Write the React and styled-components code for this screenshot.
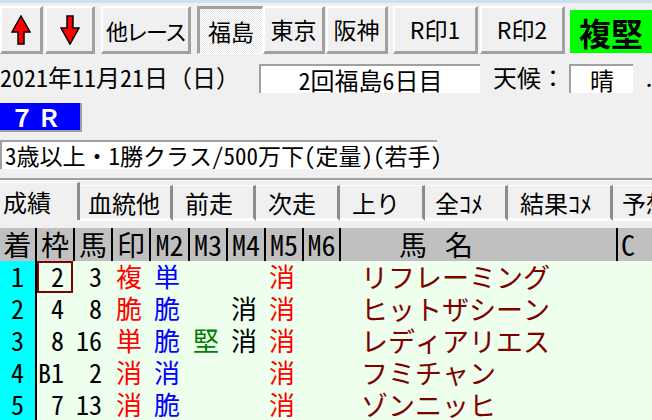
import React from "react";
import styled, { createGlobalStyle, css } from "styled-components";

const GlobalStyle = createGlobalStyle`
  html, body { margin: 0; padding: 0; background: #f0f0f0; }
  body { font-family: "Noto Sans CJK JP", sans-serif; overflow: hidden; }
`;

const MONO = `"Noto Sans Mono CJK JP", "Noto Sans CJK JP", monospace`;
const PROP = `"Noto Sans CJK JP", sans-serif`;

const Page = styled.div`
  width: 652px;
  height: 420px;
  overflow: hidden;
  background: #f0f0f0;
  display: flex;
  flex-direction: column;
`;

const TopStrip = styled.div`
  flex: none;
  height: 3px;
  background: #cddff2;
`;

const Toolbar = styled.div`
  flex: none;
  display: flex;
  align-items: flex-start;
  height: 52px;
  padding-top: 3px;
  box-sizing: border-box;
`;

const ToolButton = styled.div`
  flex: none;
  box-sizing: border-box;
  width: ${(p) => p.$w}px;
  margin-left: ${(p) => p.$ml || 0}px;
  height: 48px;
  display: flex;
  align-items: center;
  justify-content: center;
  font-family: ${PROP};
  font-size: ${(p) => p.$fs || 23}px;
  letter-spacing: ${(p) => p.$ls || 0}px;
  white-space: nowrap;
  line-height: 1;
  color: #000;
  background: #f0f0f0;
  border-top: 2px solid #fff;
  border-left: 2px solid #fff;
  border-right: 3px solid #a0a0a0;
  border-bottom: 3px solid #a0a0a0;
  ${(p) =>
    p.$pressed &&
    css`
      border-top: 3px solid #a0a0a0;
      border-left: 3px solid #a0a0a0;
      border-right: 1px solid #fff;
      border-bottom: 1px solid #fff;
      background-color: #fff;
      background-image: repeating-conic-gradient(#e6e6e6 0 25%, #fff 0 50%);
      background-size: 2px 2px;
    `}
`;

const GreenTag = styled.div`
  flex: none;
  box-sizing: border-box;
  width: 82px;
  height: 43px;
  margin-left: 5px;
  margin-top: 4px;
  background: #00ff00;
  display: flex;
  align-items: center;
  justify-content: center;
  font-family: ${PROP};
  font-weight: 700;
  font-size: 32px;
  line-height: 1;
  color: #000;
`;

const InfoRow = styled.div`
  flex: none;
  display: flex;
  align-items: center;
  height: 29px;
  margin-top: 9px;
`;

const PlainText = styled.div`
  flex: none;
  width: ${(p) => p.$w}px;
  margin-left: ${(p) => p.$ml || 0}px;
  font-family: ${MONO};
  font-size: 24px;
  line-height: 1;
  white-space: nowrap;
  color: #000;
  padding-bottom: 3px;
`;

const InsetBox = styled.div`
  flex: none;
  box-sizing: border-box;
  width: ${(p) => p.$w}px;
  height: 29px;
  background: #fff;
  border-top: 2px solid #a0a0a0;
  border-left: 2px solid #a0a0a0;
  display: flex;
  align-items: center;
  justify-content: ${(p) => (p.$left ? "flex-start" : "center")};
  padding-left: ${(p) => (p.$left ? 3 : 0)}px;
  font-family: ${MONO};
  font-size: ${(p) => p.$fs || 24}px;
  line-height: 1;
  white-space: nowrap;
  color: #000;
`;

const RaceNo = styled.div`
  flex: none;
  box-sizing: border-box;
  width: 82px;
  height: 29px;
  margin-top: 10px;
  background: #0000ff;
  border-right: 2px solid #a0a0a0;
  border-bottom: 2px solid #a0a0a0;
  display: flex;
  align-items: center;
  padding-left: 10px;
  font-family: ${MONO};
  font-weight: 700;
  font-size: 24px;
  letter-spacing: 3px;
  line-height: 1;
  color: #fff;
`;

const ClassRow = styled.div`
  flex: none;
  margin-top: 8px;
  display: flex;
`;

const Separator = styled.div`
  flex: none;
  margin-top: 9px;
  height: 0;
  border-top: 2px solid #a0a0a0;
  border-bottom: 1px solid #fff;
`;

const TabBar = styled.div`
  flex: none;
  display: flex;
  align-items: flex-start;
  height: 47px;
  overflow: hidden;
`;

const Tab = styled.div`
  flex: none;
  box-sizing: border-box;
  width: ${(p) => p.$w}px;
  height: ${(p) => (p.$active ? 38 : 36)}px;
  margin-top: ${(p) => (p.$active ? 1 : 4)}px;
  padding-left: ${(p) => p.$pl}px;
  padding-top: ${(p) => (p.$active ? 6 : 4)}px;
  background: #f0f0f0;
  border-top: 1px solid #fff;
  border-right: 3px solid #8c8c8c;
  border-bottom: ${(p) => (p.$active ? "0" : "3px solid #fff")};
  font-family: ${MONO};
  font-size: 24px;
  line-height: 1.1;
  white-space: nowrap;
  color: #000;
`;

const COLS = "37px 38px 38px 38px 39px 38px 38px 38px 37px 277px 1fr";

const GridRow = styled.div`
  flex: none;
  display: grid;
  grid-template-columns: ${COLS};
  height: ${(p) => p.$h}px;
  background: ${(p) => p.$bg};
`;

const HeadCell = styled.div`
  box-sizing: border-box;
  display: flex;
  align-items: center;
  justify-content: ${(p) => (p.$left ? "flex-start" : "center")};
  padding-left: ${(p) => p.$pl || 0}px;
  border-right: ${(p) => (p.$last ? "0" : "2px solid #000")};
  font-family: ${MONO};
  font-size: 28px;
  line-height: 1;
  letter-spacing: ${(p) => p.$ls || 0}px;
  white-space: nowrap;
  color: #000;
  padding-bottom: 2px;
`;

const Cell = styled.div`
  box-sizing: border-box;
  display: flex;
  align-items: center;
  justify-content: ${(p) =>
    p.$align === "right" ? "flex-end" : p.$align === "center" ? "center" : "flex-start"};
  padding-left: ${(p) => p.$pl || 0}px;
  padding-right: ${(p) => p.$pr || 0}px;
  border-right: 2px solid ${(p) => (p.$rank ? "#000" : "transparent")};
  background: ${(p) => (p.$rank ? "#00ffff" : "transparent")};
  box-shadow: ${(p) => (p.$boxed ? "inset 0 0 0 2px #800000" : "none")};
  font-family: ${MONO};
  font-size: ${(p) => p.$fs || 26}px;
  line-height: 1;
  white-space: nowrap;
  color: ${(p) => p.$color || "#000"};
  padding-bottom: 2px;
`;

const ArrowUp = () => (
  <svg width="20" height="30" viewBox="0 0 20 30">
    <polygon
      points="10,1 19,17 13,17 13,29 7,29 7,17 1,17"
      fill="#ff0000"
      stroke="#000"
      strokeWidth="1.5"
    />
  </svg>
);

const ArrowDown = () => (
  <svg width="20" height="30" viewBox="0 0 20 30">
    <polygon
      points="7,1 13,1 13,13 19,13 10,29 1,13 7,13"
      fill="#ff0000"
      stroke="#000"
      strokeWidth="1.5"
    />
  </svg>
);

const RED = "#ff0000";
const BLUE = "#0000ff";
const GREEN = "#008000";
const BLACK = "#000";

const rows = [
  { rank: "1", waku: "2", uma: "3", marks: [["複", RED], ["単", BLUE], null, null, ["消", RED], null], name: "リフレーミング", boxed: true },
  { rank: "2", waku: "4", uma: "8", marks: [["脆", RED], ["脆", BLUE], null, ["消", BLACK], ["消", RED], null], name: "ヒットザシーン" },
  { rank: "3", waku: "8", uma: "16", marks: [["単", RED], ["脆", BLUE], ["堅", GREEN], ["消", BLACK], ["消", RED], null], name: "レディアリエス" },
  { rank: "4", waku: "B1", uma: "2", marks: [["消", RED], ["消", BLUE], null, null, ["消", RED], null], name: "フミチャン" },
  { rank: "5", waku: "7", uma: "13", marks: [["消", RED], ["脆", BLUE], null, null, ["消", RED], null], name: "ゾンニッヒ" },
];

const buttons = [
  { w: 43, ml: 0, icon: <ArrowUp /> },
  { w: 50, ml: 2, icon: <ArrowDown /> },
  { w: 90, ml: 6, label: "他レース", fs: 22, ls: -2 },
  { w: 66, ml: 6, label: "福島", pressed: true },
  { w: 62, ml: 0, label: "東京" },
  { w: 62, ml: 1, label: "阪神" },
  { w: 85, ml: 5, label: "R印1" },
  { w: 85, ml: 2, label: "R印2" },
];

const tabs = [
  { label: "成績", w: 80, pl: 3, active: true },
  { label: "血統他", w: 93, pl: 8 },
  { label: "前走", w: 83, pl: 12 },
  { label: "次走", w: 84, pl: 12 },
  { label: "上り", w: 85, pl: 12 },
  { label: "全ｺﾒ", w: 83, pl: 10 },
  { label: "結果ｺﾒ", w: 105, pl: 12 },
  { label: "予想ｺﾒ", w: 100, pl: 9 },
];

const headers = ["着", "枠", "馬", "印", "M2", "M3", "M4", "M5", "M6"];

export default function App() {
  return (
    <Page>
      <GlobalStyle />
      <TopStrip />
      <Toolbar>
        {buttons.map((b, i) => (
          <ToolButton key={i} $w={b.w} $ml={b.ml} $pressed={b.pressed} $fs={b.fs} $ls={b.ls}>
            {b.icon || b.label}
          </ToolButton>
        ))}
        <GreenTag>複堅</GreenTag>
      </Toolbar>

      <InfoRow>
        <PlainText $w={259}>2021年11月21日（日）</PlainText>
        <InsetBox $w={221}>2回福島6日目</InsetBox>
        <PlainText $w={76} $ml={13}>天候：</PlainText>
        <InsetBox $w={64}>晴</InsetBox>
        <PlainText $w={20} $ml={10}>.</PlainText>
      </InfoRow>

      <RaceNo>７Ｒ</RaceNo>

      <ClassRow>
        <InsetBox $w={437} $left $fs={23}>
          3歳以上・1勝クラス/500万下(定量)(若手)
        </InsetBox>
      </ClassRow>

      <Separator />

      <TabBar>
        {tabs.map((t) => (
          <Tab key={t.label} $w={t.w} $pl={t.pl} $active={t.active}>
            {t.label}
          </Tab>
        ))}
      </TabBar>

      <GridRow $h={33} $bg="#c0c0c0">
        {headers.map((h) => (
          <HeadCell key={h}>{h}</HeadCell>
        ))}
        <HeadCell $left $pl={58} $ls={2}>
          馬 名
        </HeadCell>
        <HeadCell $left $pl={3} $last>
          C
        </HeadCell>
      </GridRow>

      {rows.map((r) => (
        <GridRow key={r.rank} $h={32} $bg="#eeffee">
          <Cell $rank $align="center">{r.rank}</Cell>
          <Cell $align="right" $pr={9} $boxed={r.boxed}>{r.waku}</Cell>
          <Cell $align="right" $pr={9}>{r.uma}</Cell>
          {r.marks.map((m, i) => (
            <Cell key={i} $pl={3} $color={m ? m[1] : undefined}>
              {m ? m[0] : ""}
            </Cell>
          ))}
          <Cell $pl={20} $fs={27} $color="#800000">{r.name}</Cell>
          <Cell />
        </GridRow>
      ))}
    </Page>
  );
}
